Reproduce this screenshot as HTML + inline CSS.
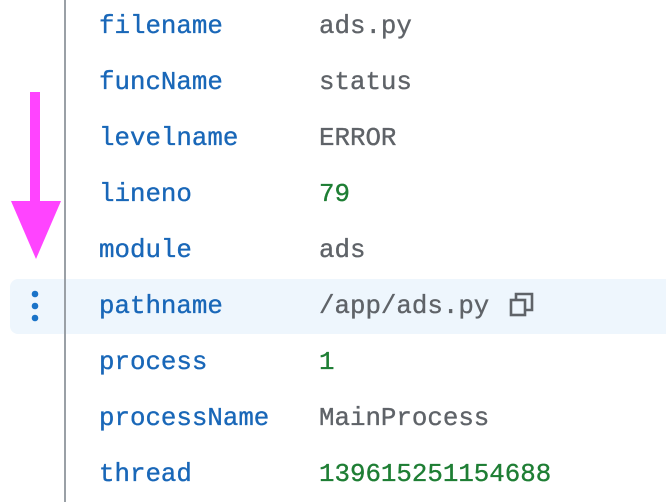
<!DOCTYPE html>
<html><head><style>
body{margin:0;width:666px;height:502px;background:#fff;position:relative;overflow:hidden;font-family:"Liberation Mono",monospace;font-size:25.8px;-webkit-text-stroke:0.35px}
.vl{position:absolute;left:64px;top:0;width:2px;height:502px;background:#9aa0a6}
.hl{position:absolute;left:10px;top:279px;width:670px;height:55px;background:#eef6fd;border-radius:8px}
.r{position:absolute;left:0;height:56px;line-height:56px;white-space:nowrap}
.k{position:absolute;left:99px;color:#1967b8}
.v{position:absolute;left:319px;color:#5f6368}
.g{color:#1e7e34}
</style></head><body>
<div class="hl"></div>
<div class="vl"></div>
<svg style="position:absolute;left:0;top:0" width="80" height="280">
<rect x="30" y="92" width="10" height="110" fill="#ff44ff"/>
<polygon points="11,201 61,201 36,259" fill="#ff44ff"/>
</svg>
<svg style="position:absolute;left:25px;top:288px" width="20" height="40">
<circle cx="10" cy="6" r="3.3" fill="#1a73c8"/><circle cx="10" cy="18" r="3.3" fill="#1a73c8"/><circle cx="10" cy="30" r="3.3" fill="#1a73c8"/>
</svg>
<div class="r" style="top:-1px"><span class="k">filename</span><span class="v">ads.py</span></div>
<div class="r" style="top:55px"><span class="k">funcName</span><span class="v">status</span></div>
<div class="r" style="top:111px"><span class="k">levelname</span><span class="v">ERROR</span></div>
<div class="r" style="top:167px"><span class="k">lineno</span><span class="v g">79</span></div>
<div class="r" style="top:223px"><span class="k">module</span><span class="v">ads</span></div>
<div class="r" style="top:279px"><span class="k">pathname</span><span class="v">/app/ads.py</span></div>
<svg style="position:absolute;left:508px;top:291px" width="28" height="28" fill="none" stroke="#5f6368" stroke-width="2.6">
<rect x="3" y="9" width="14" height="15"/><path d="M8 9V3h16v16h-7"/>
</svg>
<div class="r" style="top:335px"><span class="k">process</span><span class="v g">1</span></div>
<div class="r" style="top:391px"><span class="k">processName</span><span class="v">MainProcess</span></div>
<div class="r" style="top:447px"><span class="k">thread</span><span class="v g">139615251154688</span></div>
</body></html>
